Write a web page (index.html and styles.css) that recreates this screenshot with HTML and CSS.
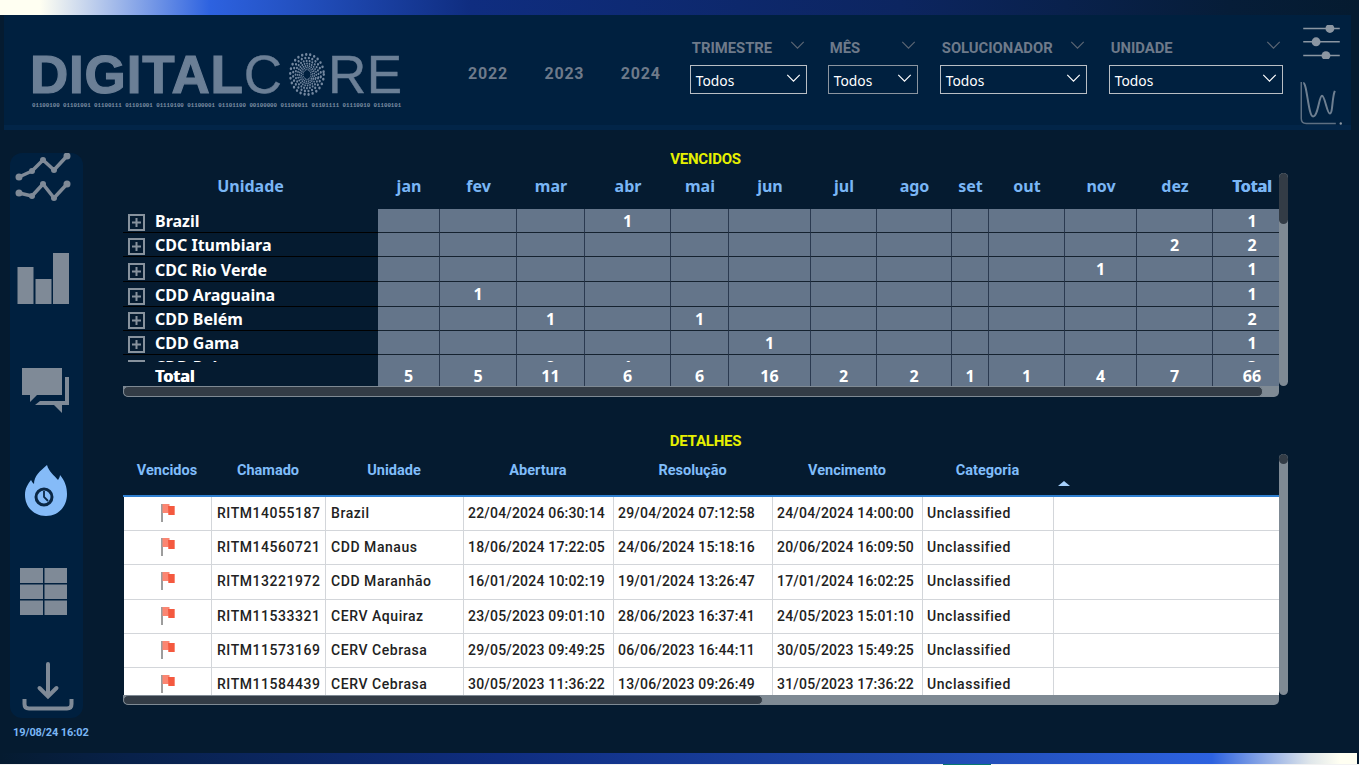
FILE: index.html
```html
<!DOCTYPE html>
<html lang="pt">
<head>
<meta charset="utf-8">
<title>Digital Core - Vencidos</title>
<link rel="stylesheet" href="styles.css">
</head>
<body>
<svg class="defs" width="0" height="0">
  <symbol id="plus" viewBox="0 0 17 17"><rect x="1" y="1" width="15" height="15" fill="none" stroke="#87929d" stroke-width="2"/><path d="M4 8.500h9M8.500 4v9" stroke="#87929d" stroke-width="2"/></symbol>
  <symbol id="flag" viewBox="0 0 16 20"><path d="M1 1v18" stroke="#3a3a3a" stroke-width="1"/><path d="M1.500 1h7v2h5v9h-6v-2h-6z" fill="#fb8672"/><path d="M7 3h6.500v9h-6z" fill="#f4593f"/></symbol>
  <symbol id="chev" viewBox="0 0 16 9"><path d="M1 1l7 7 7-7" fill="none" stroke="currentColor" stroke-width="1.300"/></symbol>
</svg>
<div class="page">
  <div class="topbar"></div>
  <header class="header">
    <div class="logo">
      <div class="wordmark"><b class="word-bold">DIGITAL</b><span class="word-thin">C</span><svg class="core" viewBox="-22 -22 44 44" width="36" height="43" preserveAspectRatio="none"><g fill="none" stroke="#7488a0" stroke-linecap="round"><circle r="20.500" stroke-width="3" stroke-dasharray="0 5"/><circle r="17" stroke-width="2.700" stroke-dasharray="0 4.400" transform="rotate(9)"/><circle r="14" stroke-width="2.400" stroke-dasharray="0 3.600" transform="rotate(16)"/><circle r="11.300" stroke-width="2.100" stroke-dasharray="0 3" transform="rotate(25)"/><circle r="9" stroke-width="1.900" stroke-dasharray="0 2.500" transform="rotate(33)"/><circle r="7" stroke-width="1.700" stroke-dasharray="0 2.200" transform="rotate(40)"/><circle r="5" stroke-width="1.500" stroke-dasharray="0 1.900"/></g></svg><span class="word-thin word-re">RE</span></div>
      <div class="binary">01100100 01101001 01100111 01101001 01110100 01100001 01101100 00100000 01100011 01101111 01110010 01100101</div>
    </div>
    <div class="years"><span>2022</span><span>2023</span><span>2024</span></div>
    <div class="slicers">
      <div class="slicer s-tri"><div class="slicer-head"><span>TRIMESTRE</span><svg class="chev-dim"><use href="#chev"/></svg></div><div class="slicer-box"><span>Todos</span><svg class="chev-bright"><use href="#chev"/></svg></div></div>
      <div class="slicer s-mes"><div class="slicer-head"><span>MÊS</span><svg class="chev-dim"><use href="#chev"/></svg></div><div class="slicer-box box-grey"><span>Todos</span><svg class="chev-bright"><use href="#chev"/></svg></div></div>
      <div class="slicer s-sol"><div class="slicer-head"><span>SOLUCIONADOR</span><svg class="chev-dim"><use href="#chev"/></svg></div><div class="slicer-box"><span>Todos</span><svg class="chev-bright"><use href="#chev"/></svg></div></div>
      <div class="slicer s-uni"><div class="slicer-head"><span>UNIDADE</span><svg class="chev-dim"><use href="#chev"/></svg></div><div class="slicer-box"><span>Todos</span><svg class="chev-bright"><use href="#chev"/></svg></div></div>
    </div>
    <div class="tools">
      <svg width="44" height="34" viewBox="1300 25 44 34"><g stroke="#8b96a2" stroke-width="1.500"><path d="M1303 28.500h37M1303 42h37M1303 56h37"/></g><g fill="#8b96a2"><circle cx="1330" cy="28.500" r="4.500"/><circle cx="1316" cy="42" r="4.500"/><circle cx="1326" cy="56" r="4.500"/></g></svg>
      <svg class="tool-chart" width="44" height="46" viewBox="1300 79 44 46"><path d="M1301 81v37q0 5 5 5h30" fill="none" stroke="#5d6f82" stroke-width="1.500"/><circle cx="1341" cy="123" r="1.200" fill="#8b96a2"/><path d="M1303 82c4 0 5 34 10 34s6-21 9-21 5 18 8 18 2-16 5-23" fill="none" stroke="#6e7f91" stroke-width="2"/></svg>
    </div>
  </header>
  <div class="main">
    <div class="side-col">
      <nav class="sidebar">
        <svg class="nav" height="77" viewBox="10 153 73 77"><g fill="none" stroke="#7f8a97" stroke-width="3.500" stroke-linejoin="round"><path d="M19 177l13-6 11-11 11 10 13-14"/><path d="M19 193l13 3 11-12 11 14 13-14"/></g><g fill="#7f8a97"><circle cx="19" cy="177" r="3.500"/><circle cx="32" cy="171" r="3"/><circle cx="43" cy="160" r="3"/><circle cx="54" cy="170" r="3"/><circle cx="67" cy="156" r="3.500"/><circle cx="19" cy="193" r="3.500"/><circle cx="32" cy="196" r="3"/><circle cx="43" cy="184" r="3"/><circle cx="54" cy="198" r="3"/><circle cx="67" cy="184" r="3.500"/></g></svg>
        <svg class="nav" height="110" viewBox="10 230 73 110"><g fill="#7f8a97"><rect x="17.500" y="267" width="16" height="37"/><rect x="35.500" y="279" width="16" height="25"/><rect x="53" y="253" width="16" height="51"/></g></svg>
        <svg class="nav" height="100" viewBox="10 340 73 100"><g fill="#7f8a97"><path d="M22 368h40v27H37l-7 7v-7h-8z"/><path d="M65 377h4v28h-7v8l-8-8H35l5-4h25z"/></g></svg>
        <svg class="nav" height="100" viewBox="10 440 73 100"><path d="M47 465c2 7 7 10 11 15 1-2 2-3 2-5 5 6 7 12 7 19 0 13-9 22-21 22s-21-9-21-21c0-7 3-11 6-15 1 2 2 3 3 4 0-8 6-13 13-19z" fill="#85bbf8"/><circle cx="44" cy="497" r="8" fill="none" stroke="#0a2745" stroke-width="3"/><path d="M44 491v6l4 4" fill="none" stroke="#0a2745" stroke-width="1.800"/></svg>
        <svg class="nav" height="100" viewBox="10 540 73 100"><g fill="#7f8a97"><rect x="20" y="568" width="23" height="15"/><rect x="44.500" y="568" width="22.500" height="15"/><rect x="20" y="584.500" width="23" height="14.500"/><rect x="44.500" y="584.500" width="22.500" height="14.500"/><rect x="20" y="600.500" width="23" height="14.500"/><rect x="44.500" y="600.500" width="22.500" height="14.500"/></g></svg>
        <svg class="nav" height="78" viewBox="10 640 73 78"><g fill="none" stroke="#7f8a97" stroke-width="4" stroke-linecap="round"><path d="M48 664v32M39.500 688l8.500 8.500 8.500-8.500"/><path d="M24.500 699v5q0 4.500 4.500 4.500h38q4.500 0 4.500-4.500v-5" stroke-linecap="butt"/></g></svg>
      </nav>
      <div class="stamp">19/08/24 16:02</div>
    </div>
    <div class="content">
      <h2 class="title">VENCIDOS</h2>
      <section class="pivot">
        <div class="pivot-view">
          <div class="p-row p-head"><div class="p-name">Unidade</div><div>jan</div><div>fev</div><div>mar</div><div>abr</div><div>mai</div><div>jun</div><div>jul</div><div>ago</div><div>set</div><div>out</div><div>nov</div><div>dez</div><div class="p-total">Total</div></div>
          <div class="p-body">
            <div class="p-row r24"><div class="p-name"><svg class="plus"><use href="#plus"/></svg>Brazil</div><i></i><i></i><i></i><i>1</i><i></i><i></i><i></i><i></i><i></i><i></i><i></i><i></i><i>1</i></div>
            <div class="p-row r24"><div class="p-name"><svg class="plus"><use href="#plus"/></svg>CDC Itumbiara</div><i></i><i></i><i></i><i></i><i></i><i></i><i></i><i></i><i></i><i></i><i></i><i>2</i><i>2</i></div>
            <div class="p-row r25"><div class="p-name"><svg class="plus"><use href="#plus"/></svg>CDC Rio Verde</div><i></i><i></i><i></i><i></i><i></i><i></i><i></i><i></i><i></i><i></i><i>1</i><i></i><i>1</i></div>
            <div class="p-row r25"><div class="p-name"><svg class="plus"><use href="#plus"/></svg>CDD Araguaina</div><i></i><i>1</i><i></i><i></i><i></i><i></i><i></i><i></i><i></i><i></i><i></i><i></i><i>1</i></div>
            <div class="p-row r24"><div class="p-name"><svg class="plus"><use href="#plus"/></svg>CDD Belém</div><i></i><i></i><i>1</i><i></i><i>1</i><i></i><i></i><i></i><i></i><i></i><i></i><i></i><i>2</i></div>
            <div class="p-row r24"><div class="p-name"><svg class="plus"><use href="#plus"/></svg>CDD Gama</div><i></i><i></i><i></i><i></i><i></i><i>1</i><i></i><i></i><i></i><i></i><i></i><i></i><i>1</i></div>
            <div class="p-row r24"><div class="p-name"><svg class="plus"><use href="#plus"/></svg>CDD Palmas</div><i></i><i></i><i>2</i><i>1</i><i></i><i></i><i></i><i></i><i></i><i></i><i></i><i></i><i>3</i></div>
          </div>
          <div class="p-row p-foot"><div class="p-name">Total</div><i>5</i><i>5</i><i>11</i><i>6</i><i>6</i><i>16</i><i>2</i><i>2</i><i>1</i><i>1</i><i>4</i><i>7</i><i>66</i></div>
        </div>
        <div class="vbar"><div class="vthumb vthumb-big"></div></div>
        <div class="hbar"><div class="hthumb hthumb-long"></div></div>
      </section>
      <h2 class="title title-2">DETALHES</h2>
      <section class="detail">
        <div class="detail-view">
          <div class="d-row d-head"><div>Vencidos</div><div>Chamado</div><div>Unidade</div><div>Abertura</div><div>Resolução</div><div>Vencimento</div><div>Categoria</div><div class="d-sort"><span class="tri"></span></div></div>
          <div class="d-body">
            <div class="d-row"><div class="d-flag"><svg class="flag"><use href="#flag"/></svg></div><div>RITM14055187</div><div>Brazil</div><div>22/04/2024 06:30:14</div><div>29/04/2024 07:12:58</div><div>24/04/2024 14:00:00</div><div>Unclassified</div><div></div></div>
            <div class="d-row"><div class="d-flag"><svg class="flag"><use href="#flag"/></svg></div><div>RITM14560721</div><div>CDD Manaus</div><div>18/06/2024 17:22:05</div><div>24/06/2024 15:18:16</div><div>20/06/2024 16:09:50</div><div>Unclassified</div><div></div></div>
            <div class="d-row"><div class="d-flag"><svg class="flag"><use href="#flag"/></svg></div><div>RITM13221972</div><div>CDD Maranhão</div><div>16/01/2024 10:02:19</div><div>19/01/2024 13:26:47</div><div>17/01/2024 16:02:25</div><div>Unclassified</div><div></div></div>
            <div class="d-row"><div class="d-flag"><svg class="flag"><use href="#flag"/></svg></div><div>RITM11533321</div><div>CERV Aquiraz</div><div>23/05/2023 09:01:10</div><div>28/06/2023 16:37:41</div><div>24/05/2023 15:01:10</div><div>Unclassified</div><div></div></div>
            <div class="d-row"><div class="d-flag"><svg class="flag"><use href="#flag"/></svg></div><div>RITM11573169</div><div>CERV Cebrasa</div><div>29/05/2023 09:49:25</div><div>06/06/2023 16:44:11</div><div>30/05/2023 15:49:25</div><div>Unclassified</div><div></div></div>
            <div class="d-row"><div class="d-flag"><svg class="flag"><use href="#flag"/></svg></div><div>RITM11584439</div><div>CERV Cebrasa</div><div>30/05/2023 11:36:22</div><div>13/06/2023 09:26:49</div><div>31/05/2023 17:36:22</div><div>Unclassified</div><div></div></div>
          </div>
        </div>
        <div class="vbar"><div class="vthumb vthumb-small"></div></div>
        <div class="hbar"><div class="hthumb hthumb-short"></div></div>
      </section>
    </div>
  </div>
  <div class="bottombar"></div>
  <div class="taskbar"><span class="task-active"></span></div>
</div>
</body>
</html>
```
FILE: styles.css
```css
* { box-sizing: border-box; }
html, body { margin: 0; padding: 0; background: #fff; }
body { width: 1364px; height: 765px; overflow: hidden; font-family: "Noto Sans", "Open Sans", sans-serif; }
.defs { display: block; height: 0; }
.page { width: 1359px; height: 765px; background: #051b30; display: flex; flex-direction: column; }

.topbar { height: 15px; background: linear-gradient(90deg, #fffff2 0, #fffff2 40px, #2d62e0 210px, #0f2d80 470px, #0c2560 900px, #061d38 1230px, #051b30 1359px); }
.bottombar { height: 11px; width: 1357px; background: linear-gradient(90deg, #051b30 0, #08214a 130px, #0f2d80 500px, #1e48ac 900px, #2d62e0 1212px, #dfe6ea 1310px, #fffff2 1340px); }
.taskbar { height: 1px; background: #f2f2f2; display: flex; }
.task-active { width: 48px; margin-left: 943px; background: #0a7a70; }

.header { margin: 0 8px 0 4px; height: 115px; background: #00203f; border-bottom: 5px solid #022548; padding-left: 26px; display: flex; }
.logo { width: 372px; flex: none; padding-top: 35px; color: #6b7f96; }
.wordmark { display: flex; align-items: center; height: 49px; font-family: "Liberation Sans", Arial, sans-serif; font-size: 53px; line-height: 49px; white-space: nowrap; }
.word-bold { font-weight: 700; letter-spacing: .8px; -webkit-text-stroke: 1.200px #6b7f96; }
.word-thin { font-weight: 400; letter-spacing: 0; -webkit-text-stroke: .4px #6b7f96; }
.word-re { letter-spacing: .5px; }
.core { flex: none; margin: 0 3px 0 7px; }
.binary { font-family: "Liberation Mono", monospace; font-weight: 700; font-size: 5.750px; line-height: 8px; margin: 3px 0 0 2px; white-space: nowrap; color: #7c8ea3; }

.years { display: flex; gap: 36.500px; margin-left: 66px; padding-top: 49px; font-family: Roboto, sans-serif; font-weight: 700; font-size: 16px; line-height: 20px; letter-spacing: .8px; color: #6e7a8a; }
.slicers { display: flex; margin-left: 29px; padding-top: 24px; }
.slicer-head { height: 26px; display: flex; justify-content: space-between; padding: 0 2px 0 2px; font-family: Roboto, sans-serif; font-weight: 700; font-size: 14.800px; line-height: 18px; color: #6e7a8a; }
.slicer-box { height: 29px; border: 1px solid #b9bec4; display: flex; justify-content: space-between; padding: 0 5px 0 5px; color: #fff; font-size: 13.800px; line-height: 30px; }
.box-grey { border-color: #8b95a0; }
.chev-dim, .chev-bright { width: 15px; height: 8px; flex: none; }
.chev-dim { color: #5b6674; margin: 2px 0 0; }
.chev-bright { color: #fff; margin-top: 8px; }
.s-tri { width: 117px; }
.s-mes { width: 90px; margin-left: 21px; }
.s-sol { width: 147px; margin-left: 22px; }
.s-uni { width: 174px; margin-left: 22px; }
.tools { margin-left: 17px; padding-top: 10px; width: 48px; display: flex; flex-direction: column; }
.tool-chart { margin-top: 21px; }

.main { height: 623px; display: flex; }
.side-col { width: 73px; margin-left: 10px; padding-top: 23px; flex: none; }
.sidebar { width: 73px; height: 565px; background: #00203f; border-radius: 12px; overflow: hidden; }
.nav { display: block; width: 73px; }
.stamp { margin: 8px -4px 0 0; padding-left: 3px; text-align: center; font-family: Roboto, sans-serif; font-weight: 700; font-size: 11px; line-height: 14px; letter-spacing: -.1px; color: #7ab6f5; white-space: nowrap; }

.content { margin-left: 40px; padding-top: 21px; width: 1165px; }
.title { margin: 0; height: 16px; text-align: center; font-family: Roboto, sans-serif; font-weight: 700; font-size: 15px; line-height: 16px; color: #e6f000; letter-spacing: -.2px; }
.title-2 { margin-top: 36px; height: 21px; }

.pivot { margin-top: 6px; display: grid; grid-template-columns: 1156px 9px; grid-template-rows: 213px 11px; }
.detail { display: grid; grid-template-columns: 1156px 9px; grid-template-rows: 241px 10px; }
.vbar { background: #7f8a94; border-radius: 5px; overflow: hidden; }
.vthumb { background: #333c46; border-radius: 5px; }
.vthumb-big { height: 51px; }
.vthumb-small { height: 10px; }
.hbar { background: #7f8a94; border-radius: 0 0 5px 5px; overflow: hidden; }
.hthumb { height: 100%; background: #333c46; border: 1px solid #7f8a94; border-radius: 5px; }
.hthumb-long { width: 1140px; }
.hthumb-short { width: 640px; }

.p-row { display: grid; grid-template-columns: 255px 62px 77px 68px 86px 58px 82px 66px 75px 37px 76px 72px 76px 66px; }
.p-head { height: 36px; padding-top: 1px; color: #7ab6f5; font-weight: 700; font-size: 16px; line-height: 24px; text-align: center; }
.p-total { padding-left: 12px; text-shadow: .6px 0 0 #7ab6f5; }
.p-body { height: 153px; overflow: hidden; }
.p-row i { display: block; font-style: normal; text-align: center; background: #64758a; border-right: 1px solid #2b3a50; border-bottom: 1px solid #15222f; color: #fff; font-weight: 700; font-size: 16px; line-height: 25px; overflow: hidden; }
.p-row i:last-child { border-right: 0; padding-left: 12px; }
.r24 { height: 24px; }
.r25 { height: 25px; }
.p-body .p-name { display: flex; align-items: center; border-bottom: 1px solid #000; color: #fff; font-weight: 700; font-size: 16px; line-height: 23px; padding: 2px 0 0 5px; white-space: nowrap; overflow: hidden; }
.plus { width: 17px; height: 17px; margin: 2px 10px 0 0; flex: none; }
.p-foot { height: 24px; }
.p-foot .p-name { padding-left: 32px; color: #fff; font-weight: 700; font-size: 16px; line-height: 28px; text-shadow: .6px 0 0 #fff; }
.p-foot i { border-bottom: 0; line-height: 28px; }

.detail-view { overflow: hidden; }
.d-row { display: grid; grid-template-columns: 88px 114px 138px 150px 159px 150px 131px 225px; height: 34.200px; }
.d-head { height: 43px; font-family: Roboto, sans-serif; font-weight: 700; font-size: 14.500px; line-height: 33px; color: #80bdfa; text-align: center; border-bottom: 2px solid #2f7fd0; }
.d-sort { display: flex; align-items: flex-end; padding: 0 0 9px 5px; }
.tri { width: 0; height: 0; border-left: 6px solid transparent; border-right: 6px solid transparent; border-bottom: 5px solid #a6d0fb; }
.d-body { height: 198px; overflow: hidden; background: #fff; margin-left: 1px; }
.d-body .d-row { color: #222; font-family: Roboto, sans-serif; font-weight: 500; font-size: 14px; line-height: 33px; letter-spacing: .55px; border-bottom: 1px solid #d3d6da; white-space: nowrap; }
.d-body .d-row > div { padding-left: 5px; border-right: 1px solid #d3d6da; background: #fff; overflow: hidden; }
.d-body .d-row > div:nth-child(n+4):nth-child(-n+6) { letter-spacing: .2px; padding-left: 4px; }
.d-body .d-row > div:nth-child(7) { padding-left: 4px; }
.d-body .d-row > div:last-child { border-right: 0; }
.d-flag { display: flex; justify-content: center; }
.flag { width: 16px; height: 20px; margin: 6px 2px 0 0; }
```
